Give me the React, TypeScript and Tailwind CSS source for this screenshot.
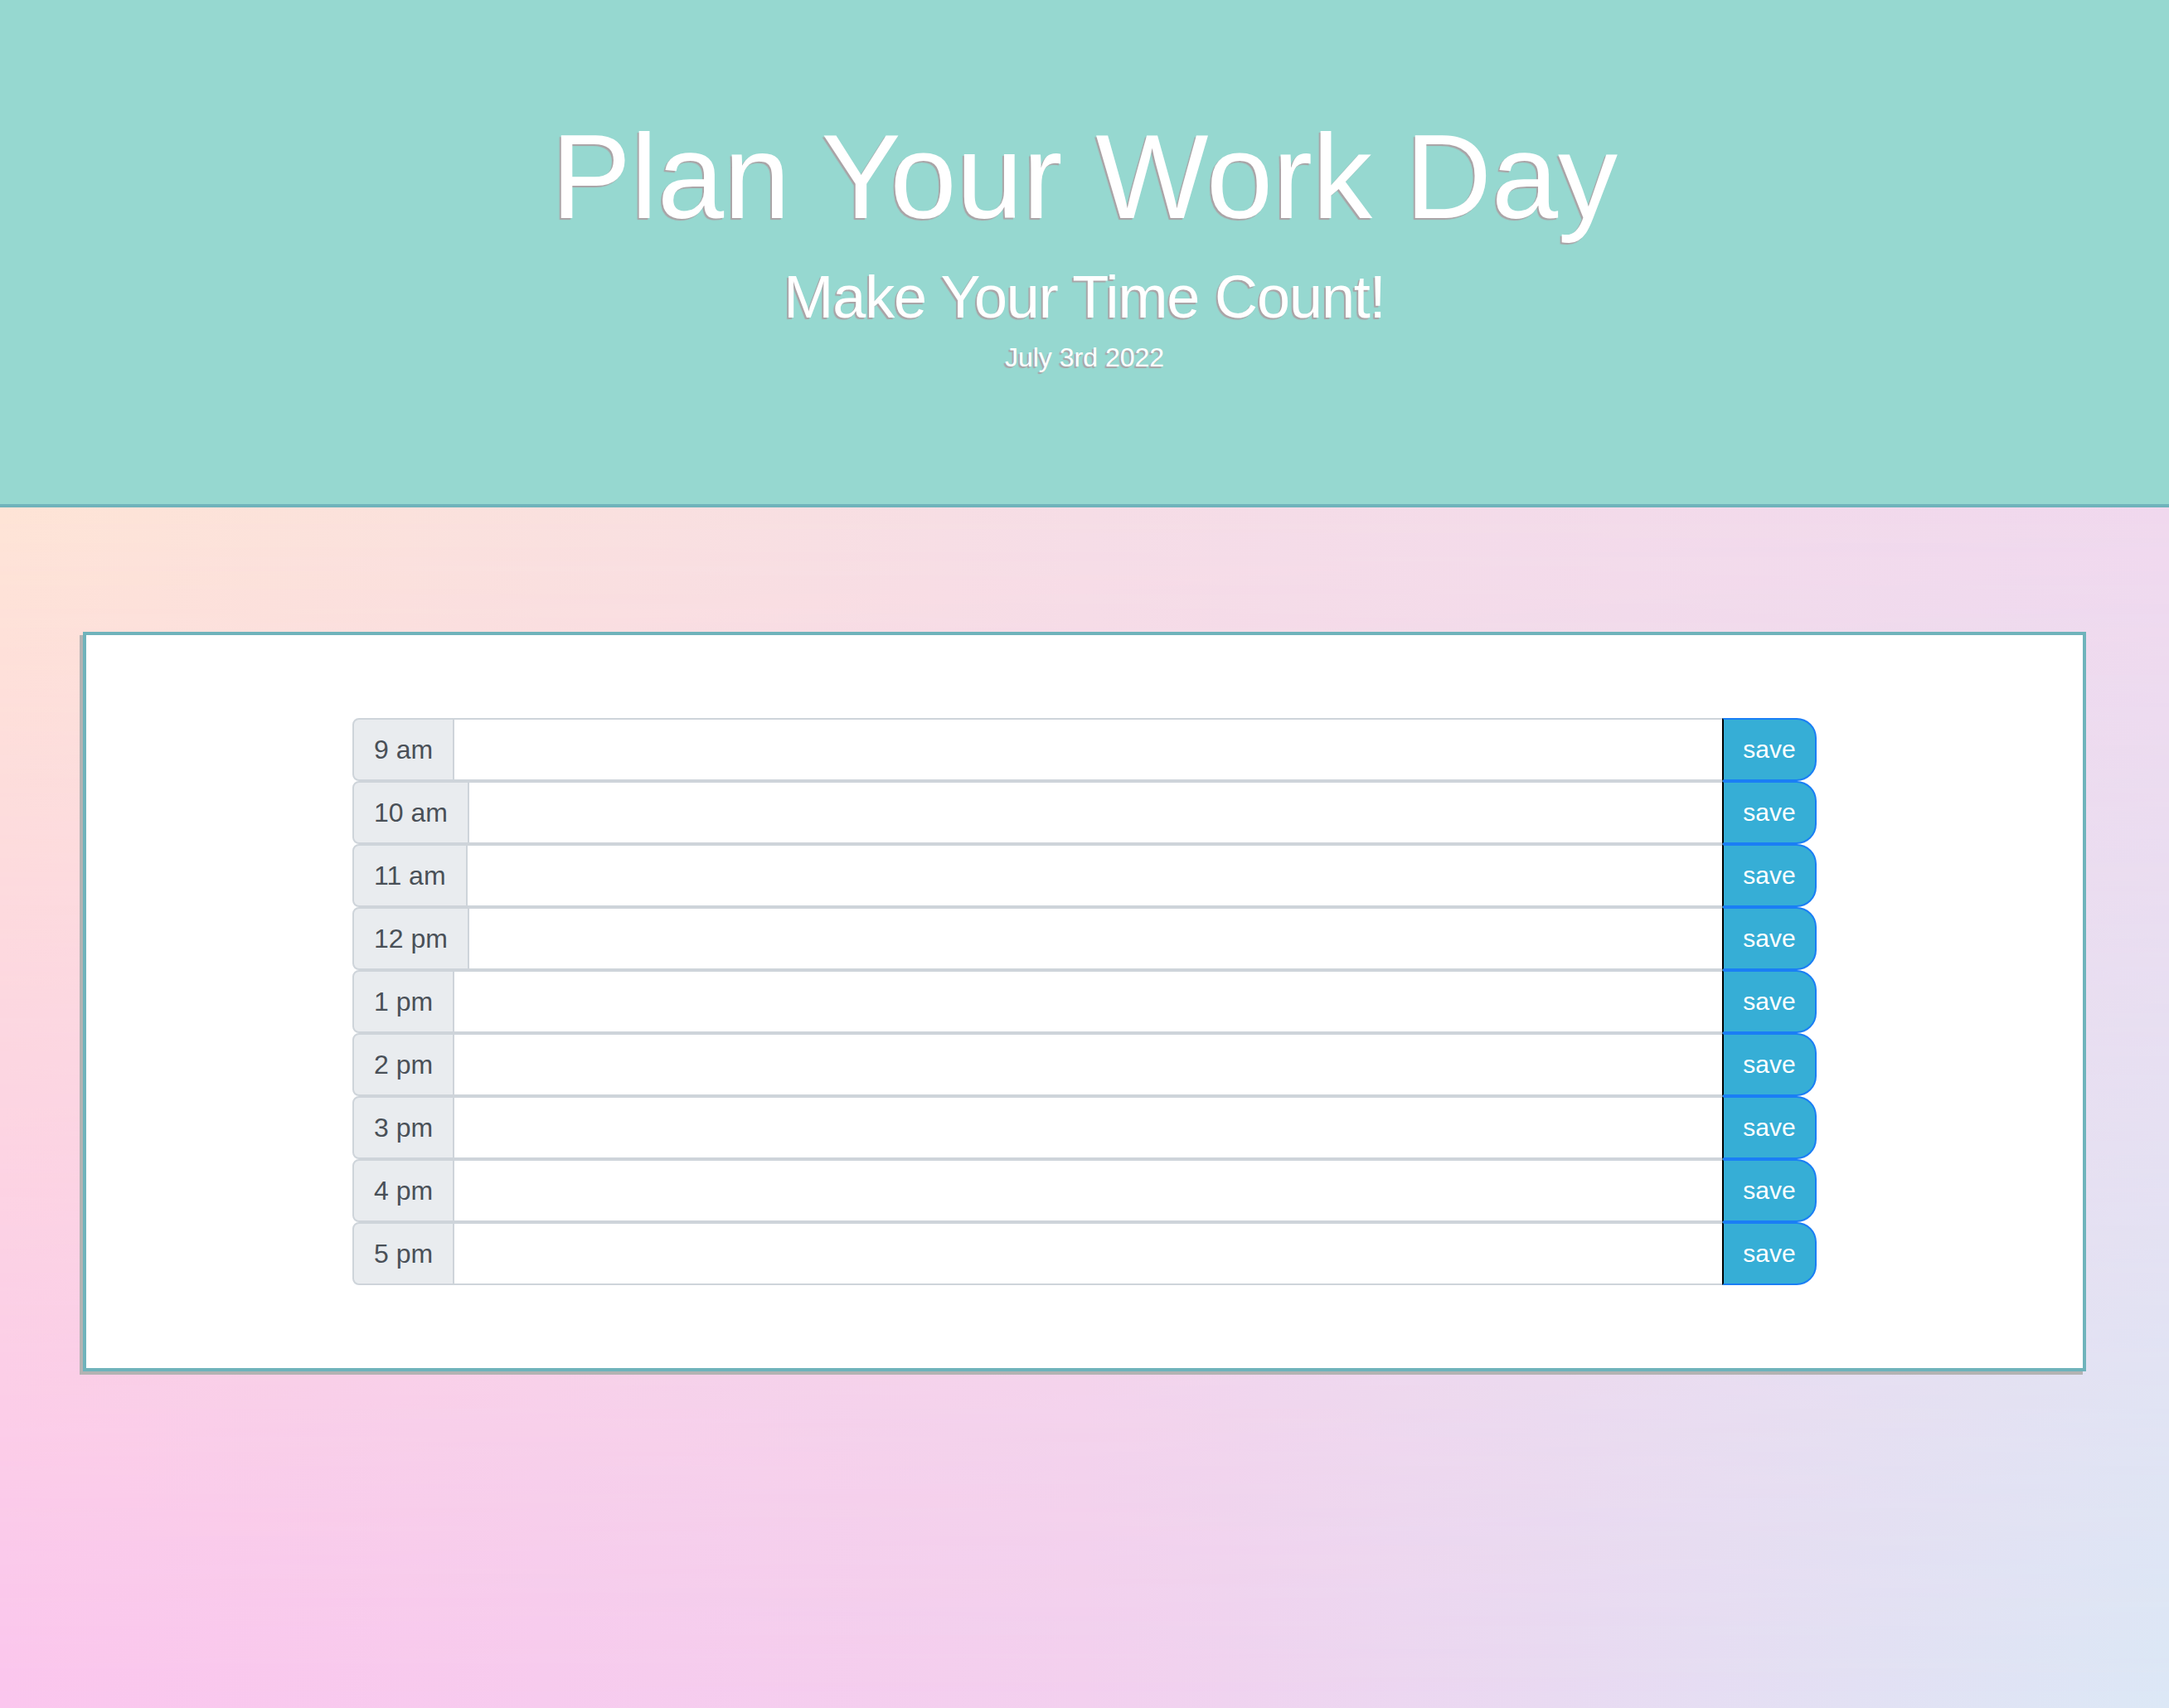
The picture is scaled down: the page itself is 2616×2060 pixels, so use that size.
import React from "react";

const hours = ["9 am", "10 am", "11 am", "12 pm", "1 pm", "2 pm", "3 pm", "4 pm", "5 pm"];

export default function App() {
  return (
    <div className="min-h-screen flex flex-col font-['Liberation_Sans',Arial,sans-serif]">
      <header className="h-[612px] shrink-0 bg-[#96d8d0] border-b-4 border-[#6fb3bb] flex flex-col items-center pt-[142px] text-white">
        <h1 className="text-[144px] leading-none [text-shadow:-2px_2px_1px_#aaa3a6]">
          Plan Your Work Day
        </h1>
        <p className="mt-[36px] text-[72px] leading-none tracking-[-1.1px] [text-shadow:-2px_2px_1px_#aaa3a6]">
          Make Your Time Count!
        </p>
        <p className="mt-[21px] text-[32px] leading-none [text-shadow:-2px_2px_1px_#aaa3a6]">
          July 3rd 2022
        </p>
      </header>
      <main className="relative flex-1 bg-[linear-gradient(to_right,#fbc6ee_0%,#f3d0ef_50%,#dce8f6_100%)] before:content-[''] before:absolute before:inset-0 before:bg-[linear-gradient(to_right,#fee4d6_0%,#f6dde6_50%,#f0d8ee_100%)] before:[mask-image:linear-gradient(to_bottom,black,transparent)]">
        <section className="relative mx-[100px] mt-[150px] mb-[100px] bg-white border-4 border-[#6fb3bb] shadow-[-4px_4px_0_#b3b3b3] py-[100px] flex justify-center">
          <div className="w-[1766px] flex flex-col">
            {hours.map((h) => (
              <div key={h} className="flex h-[76px]">
                <div className="flex items-center px-[24px] bg-[#e9ecef] border-2 border-[#ced4da] rounded-l-[8px] text-[32px] text-[#495057] leading-none whitespace-nowrap">
                  {h}
                </div>
                <textarea className="flex-1 border-y-2 border-[#ced4da] bg-white resize-none outline-none" />
                <button className="w-[114px] shrink-0 bg-[#36aed6] border-2 border-[#1a7ef5] border-l-black rounded-r-[24px] text-white text-[30px] leading-none flex items-center justify-center">
                  save
                </button>
              </div>
            ))}
          </div>
        </section>
      </main>
    </div>
  );
}
